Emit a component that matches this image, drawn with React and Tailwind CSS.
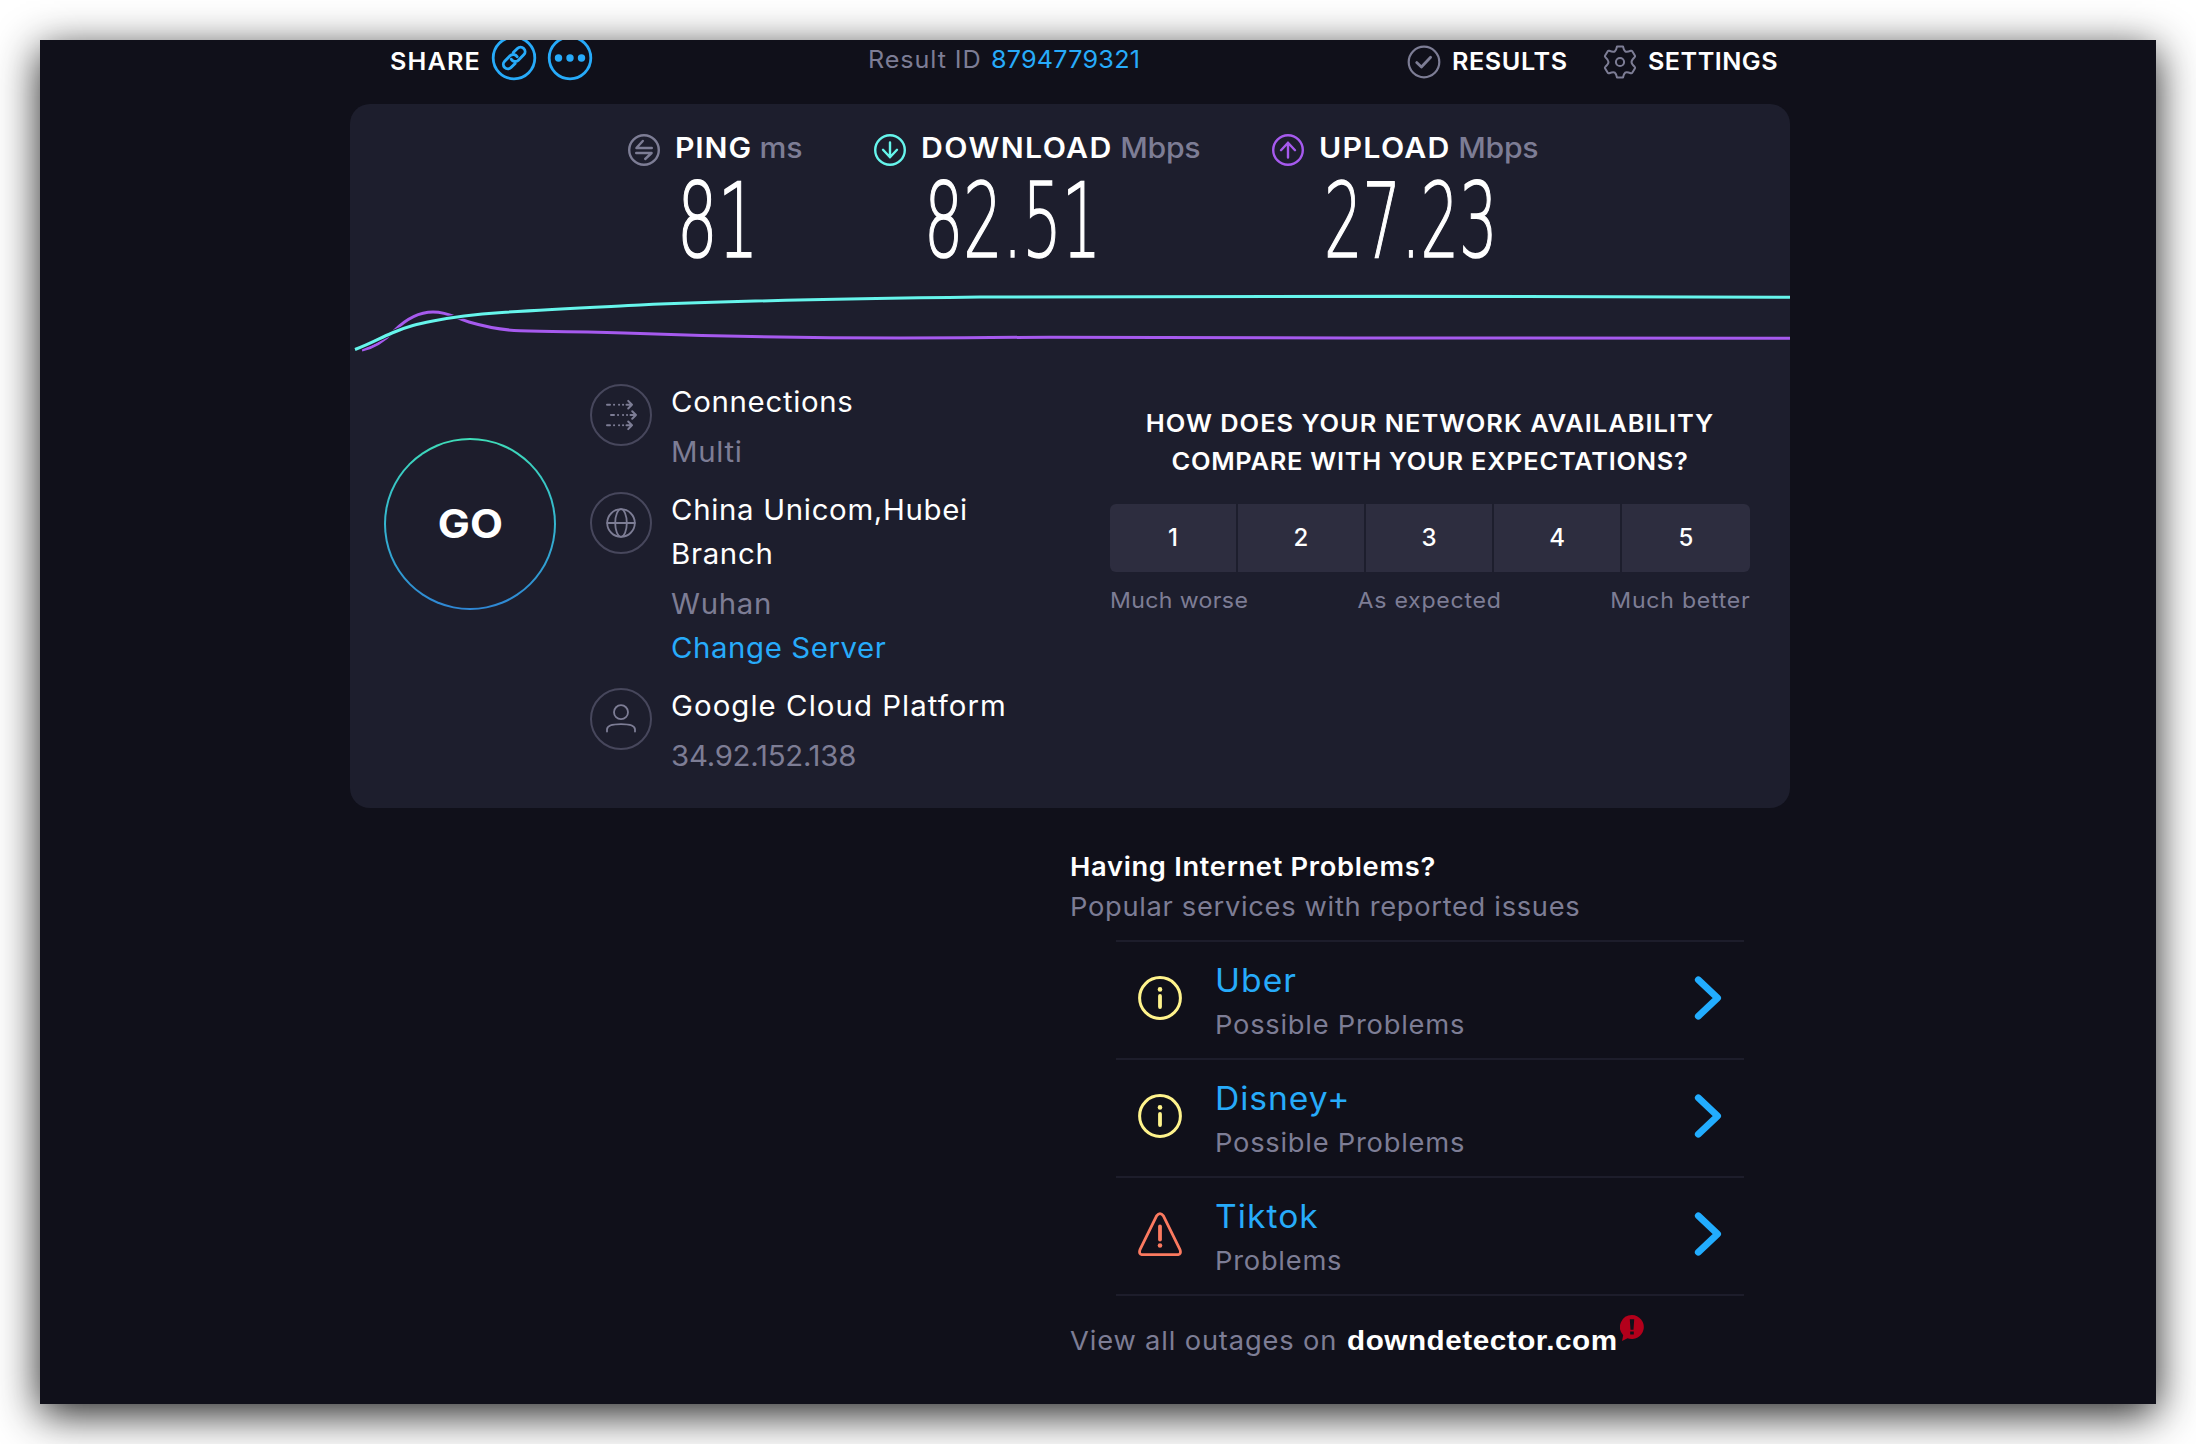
import React from "react";

const LinkIcon = () => (
  <svg className="mb-1.5 size-[46px] shrink-0" viewBox="0 0 46 46" fill="none" stroke="#27abfa">
    <circle cx="23" cy="23" r="20.8" strokeWidth="2.8" />
    <g transform="translate(23.2 23) rotate(-45)" strokeWidth="2.9" strokeLinecap="round">
      <path d="M-3.2 4.5H-9A4.5 4.5 0 0 1-9-4.5H-1.4A4.5 4.5 0 0 1 3 1.2" />
      <path d="M3.2-4.5H9A4.5 4.5 0 0 1 9 4.5H1.4A4.5 4.5 0 0 1-3-1.2" />
    </g>
  </svg>
);

const DotsIcon = () => (
  <svg className="mb-1.5 size-[46px] shrink-0" viewBox="0 0 46 46" fill="none">
    <circle cx="23" cy="23" r="20.8" stroke="#27abfa" strokeWidth="2.8" />
    <g fill="#27abfa">
      <circle cx="11.5" cy="23" r="3.7" />
      <circle cx="23" cy="23" r="3.7" />
      <circle cx="34.5" cy="23" r="3.7" />
    </g>
  </svg>
);

const CheckIcon = () => (
  <svg className="mt-0.5 size-[34px]" viewBox="-17 -17 34 34" fill="none" stroke="#7d7d95">
    <circle r="15.3" strokeWidth="2.2" />
    <path d="M-7.3.6 -2.6 5 6.6-4.8" strokeWidth="2.8" strokeLinecap="round" strokeLinejoin="round" />
  </svg>
);

const GearIcon = () => (
  <svg className="mt-0.5 size-[34px]" viewBox="-17 -17 34 34" fill="none" stroke="#7d7d95" strokeWidth="2" strokeLinejoin="round">
    <circle r="4.1" />
    <path d="M-3-15.5H3Q3.8-11.6 5.2-10.6T10.8-11.2Q11.8-11.6 12.4-10.6L15-6.2Q15.4-5.4 14.6-4.8Q11.5-2 11.5 0T14.6 4.8Q15.4 5.4 15 6.2L12.4 10.6Q11.8 11.6 10.8 11.2Q6.6 9.6 5.2 10.6T3 15.5H-3Q-3.8 11.6-5.2 10.6T-10.8 11.2Q-11.8 11.6-12.4 10.6L-15 6.2Q-15.4 5.4-14.6 4.8Q-11.5 2-11.5 0T-14.6-4.8Q-15.4-5.4-15-6.2L-12.4-10.6Q-11.8-11.6-10.8-11.2Q-6.6-9.6-5.2-10.6T-3-15.5Z" />
  </svg>
);

const metricPaths = {
  ping: "M7.8-2H-7.6L-1.2-9M-7.8 3H7.6L1.2 9",
  down: "M0-7.6V7.2M-7-.2 0 7.2 7-.2",
  up: "M0 7.6V-7.2M-7 .2 0-7.2 7 .2",
};

const MetricIcon = ({ kind, color }) => (
  <svg className="mt-[6px] size-8 shrink-0" viewBox="-16 -16 32 32" fill="none" stroke={color} strokeWidth="2.4" strokeLinecap="round" strokeLinejoin="round">
    <circle r="14.8" />
    <path d={metricPaths[kind]} />
  </svg>
);

const Metric = ({ kind, color, label, unit, value, labelClass, unitClass, valueClass }) => (
  <div className="flex items-start">
    <MetricIcon kind={kind} color={color} />
    <div className="ml-[15px]">
      <div className="flex h-[39px] origin-left scale-x-[1.08] items-center text-[28px] whitespace-nowrap">
        <span className={`font-semibold text-white ${labelClass}`}>{label}</span>
        <span className={`ml-[7px] font-medium text-[#7d7d95] ${unitClass}`}>{unit}</span>
      </div>
      <div className={`mt-0.5 h-[103px] w-0 origin-left font-['DejaVu_Sans',sans-serif] text-[104px] leading-[105px] font-extralight whitespace-nowrap text-white [-webkit-text-stroke:1.5px_white] ${valueClass}`}>
        {value}
      </div>
    </div>
  </div>
);

const InfoIcon = ({ children }) => (
  <svg className="mt-1 size-[62px] shrink-0" viewBox="-31 -31 62 62" fill="none" stroke="#7d7d95" strokeWidth="1.8" strokeLinecap="round" strokeLinejoin="round">
    <circle r="30" stroke="#47475c" strokeWidth="2" />
    {children}
  </svg>
);

const DashedArrow = ({ x, y }) => (
  <g transform={`translate(${x} ${y})`}>
    <path d="M0 0H3M12-0H12.1M16 0H16.1M7 0H7.1" strokeWidth="2" />
    <path d="M19.5 0H25M21.2-3.8 25 0 21.2 3.8" strokeWidth="2" />
  </g>
);

const Info = ({ icon, name, nameClass = "", children }) => (
  <div className="flex gap-[18.5px]">
    <InfoIcon>{icon}</InfoIcon>
    <div className="w-[349.5px] origin-left scale-x-[1.05] text-[28px] leading-[44px] tracking-[0.65px]">
      <div className={`mb-1.5 text-white ${nameClass}`}>{name}</div>
      {children}
    </div>
  </div>
);

const AlertIcon = ({ severe }) =>
  severe ? (
    <svg className="mt-[19px] size-11" viewBox="-22 -22 44 44" fill="none" stroke="#fb7a60" strokeLinecap="round" strokeLinejoin="round">
      <path d="M-3.4-18.2Q0-22.6 3.4-18.2L20 15.6Q21.6 20.6 17.4 20.7H-17.4Q-21.6 20.6-20 15.6Z" strokeWidth="2.8" />
      <path d="M0-7.5V5.5" strokeWidth="3.8" />
      <circle cy="11.5" r="2.3" fill="#fb7a60" stroke="none" />
    </svg>
  ) : (
    <svg className="mt-[19px] size-11" viewBox="-22 -22 44 44" fill="none" stroke="#fff38c" strokeLinecap="round">
      <circle r="20.4" strokeWidth="3" />
      <path d="M0-2V9" strokeWidth="3.8" />
      <circle cy="-8.6" r="2.3" fill="#fff38c" stroke="none" />
    </svg>
  );

const services = [
  { name: "Uber", status: "Possible Problems", tracking: "tracking-[1px]" },
  { name: "Disney+", status: "Possible Problems", tracking: "tracking-[0.9px]" },
  { name: "Tiktok", status: "Problems", severe: true, tracking: "tracking-[1px]" },
];

export default function App() {
  return (
    <div className="h-[1444px] w-[2196px] overflow-hidden bg-white p-10 font-['Inter',sans-serif]">
      <div className="h-[1364px] w-[2116px] bg-[#10101a] px-[310px] shadow-[0_10px_40px_rgba(0,0,0,0.88)]">
        <div className="h-16 w-[1440px] overflow-hidden">
          <header className="flex h-[42px] items-center pr-[7px] pl-10 text-[24px]">
            <div className="flex w-[478px] items-center">
              <span className="mt-0.5 w-[101px] origin-left scale-x-[1.05] font-semibold tracking-[1.1px] text-white">SHARE</span>
              <LinkIcon />
              <div className="w-[10px]" />
              <DotsIcon />
            </div>
            <div className="mb-0.5 flex origin-left scale-x-[1.05] items-center gap-[9px]">
              <span className="tracking-[0.85px] text-[#7d7d95]">Result ID</span>
              <span className="tracking-[0.2px] text-[#27abfa]">8794779321</span>
            </div>
            <div className="ml-auto flex items-center font-semibold text-white">
              <CheckIcon />
              <span className="mt-0.5 ml-[11px] w-[151px] origin-left scale-x-[1.05] tracking-[0.55px]">RESULTS</span>
              <GearIcon />
              <span className="mt-0.5 ml-[11px] w-[135px] origin-left scale-x-[1.05] tracking-[0.45px]">SETTINGS</span>
            </div>
          </header>
        </div>

        <main className="h-[704px] w-[1440px] rounded-[20px] bg-[#1d1e2d]">
          <div className="grid grid-cols-[246px_398px_300px] pt-6 pl-[278px]">
            <Metric kind="ping" color="#7d7d95" label="PING" unit="ms" value="81" labelClass="tracking-[0.8px]" unitClass="tracking-normal" valueClass="ml-[2px] scale-x-[0.615]" />
            <Metric kind="down" color="#66f5ec" label="DOWNLOAD" unit="Mbps" value="82.51" labelClass="tracking-[1.3px]" unitClass="tracking-[-0.3px]" valueClass="ml-[3px] scale-x-[0.595]" />
            <Metric kind="up" color="#a65aee" label="UPLOAD" unit="Mbps" value="27.23" labelClass="tracking-[1.2px]" unitClass="tracking-[-0.3px]" valueClass="ml-[5px] scale-x-[0.583]" />
          </div>

          <svg className="mt-2 block h-[94px] w-[1440px]" viewBox="350 280 1440 94" fill="none">
            <path d="M362 350C374 348 384 341 394 331C406 319 418 312 433 312C449 312 455 318 469 322C486 327 500 330 520 330.8C560 332 590 331.5 640 333.5C740 337 830 338 900 338C960 338 980 337.2 1050 337.2C1150 337.2 1250 337.5 1350 338C1450 338.6 1600 338.2 1790 338.3" stroke="#a65aee" strokeWidth="3" />
            <path d="M355 349.5C372 343 380 338 392 333C408 326 418 324 433 321C460 315.5 480 314 502 312.5C550 309 600 307 640 305C740 300.5 850 298.6 980 297C1100 296 1250 296 1400 296.3C1500 297 1600 297.6 1790 297.3" stroke="#1d1e2d" strokeWidth="5" />
            <path d="M355 349.5C372 343 380 338 392 333C408 326 418 324 433 321C460 315.5 480 314 502 312.5C550 309 600 307 640 305C740 300.5 850 298.6 980 297C1100 296 1250 296 1400 296.3C1500 297 1600 297.6 1790 297.3" stroke="#66f5ec" strokeWidth="3" />
          </svg>

          <div className="flex pl-[34px]">
            <div className="mt-[64px] size-[172px] rounded-full bg-linear-to-b from-[#3fdcb8] via-[#35b6d0] to-[#2f86d4] p-[2px]">
              <div className="flex size-full items-center justify-center rounded-full bg-[#1d1d2c] text-[40px] font-bold text-white">
                <span className="scale-x-[1.07]">GO</span>
              </div>
            </div>

            <div className="mt-[6px] ml-[34px] flex flex-col gap-[14px]">
              <Info
                name="Connections"
                icon={<><DashedArrow x={-14} y={-10.3} /><DashedArrow x={-10} y={0} /><DashedArrow x={-14} y={10.3} /></>}
              >
                <div className="text-[#7d7d95]">Multi</div>
              </Info>
              <Info
                name="China Unicom,Hubei Branch"
                icon={<><circle r="13.8" /><ellipse rx="5.8" ry="13.8" /><path d="M-13.8 0H13.8" /></>}
              >
                <div className="text-[#7d7d95]">Wuhan</div>
                <div className="tracking-[0.55px] text-[#27abfa]">Change Server</div>
              </Info>
              <Info
                name="Google Cloud Platform"
                nameClass="tracking-[1px]"
                icon={<><circle cy="-6.8" r="7" /><path d="M-14 12.5V10.5C-14 6.5-7 5.2 0 5.2S14 6.5 14 10.5V12.5" /></>}
              >
                <div className="tracking-[-0.25px] text-[#7d7d95]">34.92.152.138</div>
              </Info>
            </div>

            <div className="mt-[31px] ml-[90px] w-[640px]">
              <h2 className="scale-x-[1.06] text-center text-[24px] leading-[38px] font-semibold text-white">
                <div className="tracking-[0.93px]">HOW DOES YOUR NETWORK AVAILABILITY</div>
                <div className="tracking-[0.68px]">COMPARE WITH YOUR EXPECTATIONS?</div>
              </h2>
              <div className="mt-[23px] grid h-[68px] grid-cols-5 overflow-hidden rounded-md bg-[#2d2d3f] text-[24px] font-medium text-white">
                {[1, 2, 3, 4, 5].map((n) => (
                  <div key={n} className="flex items-center justify-center border-r-2 border-[#1d1e2d] last:border-r-0">{n}</div>
                ))}
              </div>
              <div className="mt-3 flex justify-between text-[22px] leading-8 text-[#7d7d95]">
                <span className="origin-left scale-x-[1.05] tracking-[0.35px]">Much worse</span>
                <span className="scale-x-[1.05] tracking-[0.7px]">As expected</span>
                <span className="origin-right scale-x-[1.05] tracking-[0.7px]">Much better</span>
              </div>
            </div>
          </div>
        </main>

        <section className="mt-[41px] ml-[720px]">
          <h3 className="origin-left scale-x-[1.05] text-[26px] leading-9 font-semibold tracking-[0.65px] text-white">Having Internet Problems?</h3>
          <p className="mt-0.5 origin-left scale-x-[1.05] text-[26px] leading-10 tracking-[0.65px] text-[#7d7d95]">Popular services with reported issues</p>
          <ul className="mt-[13px] ml-[46px] w-[628px] border-t-2 border-[#1d1d2b]">
            {services.map((s) => (
              <li key={s.name} className="flex h-[118px] items-start border-b-2 border-[#1d1d2b] pt-[15px] pr-[22px] pl-[22px]">
                <AlertIcon severe={s.severe} />
                <div className="mt-px ml-[33px] origin-left scale-x-[1.05]">
                  <div className={`text-[32px] leading-[46px] text-[#27abfa] ${s.tracking}`}>{s.name}</div>
                  <div className="text-[26px] leading-[42px] tracking-[0.72px] text-[#7d7d95]">{s.status}</div>
                </div>
                <svg className="mt-[19px] ml-auto h-11 w-[28px]" viewBox="0 0 28 44" fill="none" stroke="#22adff" strokeWidth="6.8" strokeLinecap="round" strokeLinejoin="round">
                  <path d="M4.3 3.8 23.6 22 4.3 40.2" />
                </svg>
              </li>
            ))}
          </ul>
          <div className="mt-[25px] flex h-10 items-baseline text-[26px] leading-10">
            <span className="w-[277px] origin-left scale-x-[1.05] tracking-[0.8px] text-[#7d7d95]">View all outages on</span>
            <span className="w-[273px] origin-left scale-x-[1.06] font-['Liberation_Sans',sans-serif] text-[28px] font-bold tracking-[0.5px] text-white">downdetector.com</span>
            <svg className="-mt-[6px] h-[26px] w-6 self-start" viewBox="0 0 24 26">
              <path d="M12 0A12 12 0 1 1 7.5 23.2L2 26 3.2 20.2A12 12 0 0 1 12 0Z" fill="#b3001b" />
              <path d="M9.8 4.2H14.2L13.5 14.8H10.5ZM10.2 16.6H13.8V19.6H10.2Z" fill="#10101a" />
            </svg>
          </div>
        </section>
      </div>
    </div>
  );
}
